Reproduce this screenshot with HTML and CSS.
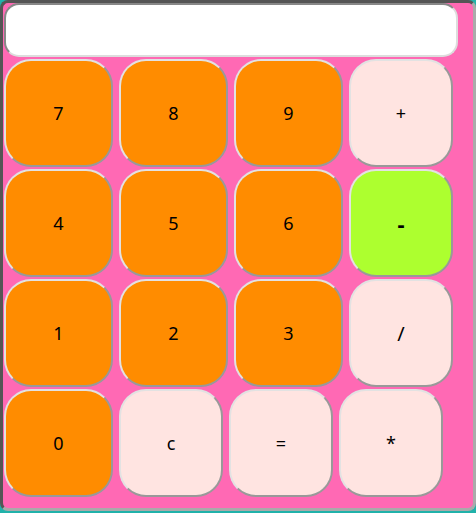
FILE: index.html
```html
<!DOCTYPE html>
<html>
<head>
<meta charset="utf-8">
<link rel="stylesheet" href="styles.css">
</head>
<body>
<div class="calc">
  <input class="display" type="text">
  <div class="row">
    <button class="btn num">7</button>
    <button class="btn num">8</button>
    <button class="btn num">9</button>
    <button class="btn op">+</button>
  </div>
  <div class="row">
    <button class="btn num">4</button>
    <button class="btn num">5</button>
    <button class="btn num">6</button>
    <button class="btn op minus">-</button>
  </div>
  <div class="row">
    <button class="btn num">1</button>
    <button class="btn num">2</button>
    <button class="btn num">3</button>
    <button class="btn op slash">/</button>
  </div>
  <div class="row">
    <button class="btn num">0</button>
    <button class="btn op">c</button>
    <button class="btn op">=</button>
    <button class="btn op">*</button>
  </div>
</div>
</body>
</html>
```
FILE: styles.css
```css
html, body {
  margin: 0;
  padding: 0;
  background: #20b2aa;
  height: 513px;
  overflow: hidden;
}
.calc {
  box-sizing: border-box;
  width: 476px;
  height: 511px;
  background: #ff69b4;
  border: 3px solid;
  border-color: #555 #aaa #aaa #555;
  border-radius: 8px;
  padding: 0 1px 11px 1px;
  display: flex;
  flex-direction: column;
  gap: 2px;
}
.display {
  box-sizing: border-box;
  width: 454px;
  height: 54px;
  margin: 0;
  background: #fff;
  border: 2px solid;
  border-color: #888 #ddd #ddd #888;
  border-radius: 15px;
  outline: none;
}
.row {
  display: flex;
  gap: 6px;
}
.btn {
  box-sizing: border-box;
  height: 108px;
  margin: 0;
  padding: 0;
  border: 2px solid;
  border-color: #e2e2e2 #999 #999 #e2e2e2;
  border-radius: 27px;
  font-family: "Noto Sans", "Open Sans", sans-serif;
  font-size: 18px;
  color: #000;
}
.num {
  width: 109px;
  background: #ff8c00;
}
.op {
  width: 104px;
  background: #ffe4e1;
}
.minus {
  background: #adff2f;
  font-size: 22px;
  font-weight: bold;
}
.slash {
  font-size: 20px;
}
```
